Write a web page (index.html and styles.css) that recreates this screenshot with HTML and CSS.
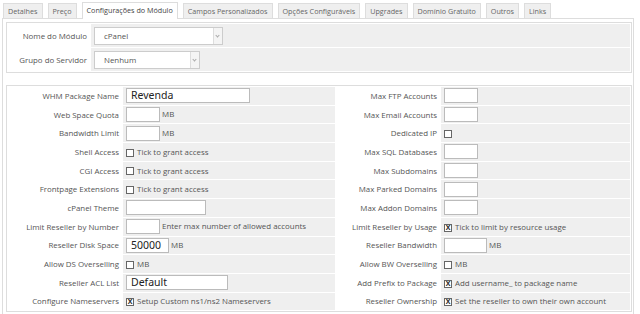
FILE: index.html
```html
<!DOCTYPE html>
<html lang="pt">
<head>
    <meta charset="UTF-8">
    <title>Configurações do Módulo</title>
    <link rel="stylesheet" href="styles.css">
</head>
<body>
    <ul class="tabs">
        <li>Detalhes</li>
        <li>Preço</li>
        <li class="active">Configurações do Módulo</li>
        <li>Campos Personalizados</li>
        <li>Opções Configuráveis</li>
        <li>Upgrades</li>
        <li>Domínio Gratuito</li>
        <li>Outros</li>
        <li>Links</li>
    </ul>

    <div class="tab-box">
        <table class="form top">
            <tr>
                <td class="label">Nome do Módulo</td>
                <td class="field"><span class="select wide">cPanel<i class="arrow"></i></span></td>
            </tr>
            <tr>
                <td class="label">Grupo do Servidor</td>
                <td class="field"><span class="select">Nenhum<i class="arrow"></i></span></td>
            </tr>
        </table>

        <table class="form main">
            <colgroup>
                <col class="c-label-l">
                <col class="c-field-l">
                <col class="c-label-r">
                <col class="c-field-r">
            </colgroup>
            <tr>
                <td class="label">WHM Package Name</td>
                <td class="field"><span class="input big w-name">Revenda</span></td>
                <td class="label">Max FTP Accounts</td>
                <td class="field"><span class="input"></span></td>
            </tr>
            <tr>
                <td class="label">Web Space Quota</td>
                <td class="field"><span class="input"></span> MB</td>
                <td class="label">Max Email Accounts</td>
                <td class="field"><span class="input"></span></td>
            </tr>
            <tr>
                <td class="label">Bandwidth Limit</td>
                <td class="field"><span class="input"></span> MB</td>
                <td class="label">Dedicated IP</td>
                <td class="field"><span class="check"></span></td>
            </tr>
            <tr>
                <td class="label">Shell Access</td>
                <td class="field"><span class="check"></span> Tick to grant access</td>
                <td class="label">Max SQL Databases</td>
                <td class="field"><span class="input"></span></td>
            </tr>
            <tr>
                <td class="label">CGI Access</td>
                <td class="field"><span class="check"></span> Tick to grant access</td>
                <td class="label">Max Subdomains</td>
                <td class="field"><span class="input"></span></td>
            </tr>
            <tr>
                <td class="label">Frontpage Extensions</td>
                <td class="field"><span class="check"></span> Tick to grant access</td>
                <td class="label">Max Parked Domains</td>
                <td class="field"><span class="input"></span></td>
            </tr>
            <tr>
                <td class="label">cPanel Theme</td>
                <td class="field"><span class="input w-theme"></span></td>
                <td class="label">Max Addon Domains</td>
                <td class="field"><span class="input"></span></td>
            </tr>
            <tr>
                <td class="label">Limit Reseller by Number</td>
                <td class="field"><span class="input"></span> Enter max number of allowed accounts</td>
                <td class="label">Limit Reseller by Usage</td>
                <td class="field"><span class="check on">X</span> Tick to limit by resource usage</td>
            </tr>
            <tr>
                <td class="label">Reseller Disk Space</td>
                <td class="field"><span class="input big w-mid">50000</span> MB</td>
                <td class="label">Reseller Bandwidth</td>
                <td class="field"><span class="input w-mid"></span> MB</td>
            </tr>
            <tr>
                <td class="label">Allow DS Overselling</td>
                <td class="field"><span class="check"></span> MB</td>
                <td class="label">Allow BW Overselling</td>
                <td class="field"><span class="check"></span> MB</td>
            </tr>
            <tr>
                <td class="label">Reseller ACL List</td>
                <td class="field"><span class="input big w-acl">Default</span></td>
                <td class="label">Add Prefix to Package</td>
                <td class="field"><span class="check on">X</span> Add username_ to package name</td>
            </tr>
            <tr>
                <td class="label">Configure Nameservers</td>
                <td class="field"><span class="check on">X</span> Setup Custom ns1/ns2 Nameservers</td>
                <td class="label">Reseller Ownership</td>
                <td class="field"><span class="check on">X</span> Set the reseller to own their own account</td>
            </tr>
        </table>
    </div>
</body>
</html>
```

FILE: styles.css
```css
body {
    margin: 0;
    font-family: "Open Sans", sans-serif;
    font-size: 7.9px;
    color: #555;
    background: #fff;
}

.tabs {
    display: flex;
    gap: 5px;
    list-style: none;
    margin: 0;
    padding: 2px 0 0 3px;
    height: 16px;
}
.tabs li {
    margin-top: 1px;
    height: 14px;
    line-height: 14px;
    padding: 0 4px;
    font-size: 7.2px;
    color: #666;
    background: #efefef;
    border: 1px solid #ddd;
    border-bottom: none;
}
.tabs li.active {
    margin-top: 0;
    height: 16px;
    background: #fff;
    color: #444;
}

.tab-box {
    margin: 0 6px 0 2px;
    border: 1px solid #ddd;
    padding: 3px 1px 2px 3px;
}

.form {
    width: 626px;
    border: 1px solid #ddd;
    border-spacing: 1px;
    background: #fff;
}
.form td {
    padding: 0 3px;
    white-space: nowrap;
}
.form .label {
    text-align: right;
    background: #fff;
}
.form .field {
    background: #efefef;
}

.top {
    margin-bottom: 12px;
}
.top tr {
    height: 23px;
}
.top .label {
    width: 76px;
}

.main tr {
    height: 17.7px;
}
.c-label-l { width: 114px; }
.c-field-l { width: 212px; }
.c-label-r { width: 104px; }

.select {
    display: inline-flex;
    align-items: center;
    position: relative;
    box-sizing: border-box;
    width: 106px;
    height: 18px;
    padding-left: 9px;
    border: 1px solid #ccc;
    background: #fff;
    vertical-align: middle;
}
.select.wide {
    width: 129px;
}
.arrow {
    position: absolute;
    right: 0;
    top: 0;
    bottom: 0;
    width: 8px;
    border-left: 1px solid #ddd;
    background: #f4f4f4;
}
.arrow::after {
    content: "";
    position: absolute;
    left: 2px;
    top: 6px;
    width: 2px;
    height: 2px;
    border-right: 1px solid #aaa;
    border-bottom: 1px solid #aaa;
    transform: rotate(45deg);
}

.input {
    display: inline-block;
    box-sizing: border-box;
    width: 34px;
    height: 15px;
    border: 1px solid #bbb;
    background: #fff;
    vertical-align: middle;
}
.input.big {
    padding-left: 4px;
    font-family: "Noto Sans", sans-serif;
    font-size: 10.5px;
    line-height: 13px;
    color: #222;
}
.w-name { width: 124px; }
.w-theme { width: 80px; }
.w-mid { width: 43px; }
.w-acl { width: 102px; }

.check {
    display: inline-block;
    box-sizing: border-box;
    width: 8px;
    height: 8px;
    margin-right: 1px;
    border: 1px solid #666;
    background: #fff;
    vertical-align: middle;
    font-size: 7px;
    line-height: 6px;
    text-align: center;
    color: #222;
    font-weight: bold;
}
```
